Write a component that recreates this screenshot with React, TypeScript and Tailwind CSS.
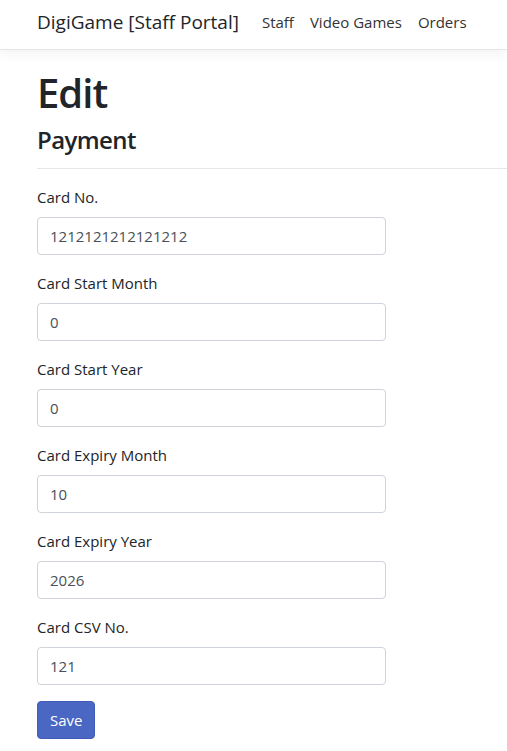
import { useState } from 'react';

const font = { fontFamily: '"Segoe UI", "Open Sans", "Noto Sans", sans-serif' };

const initial = [
  { label: 'Card No.', value: '1212121212121212' },
  { label: 'Card Start Month', value: '0' },
  { label: 'Card Start Year', value: '0' },
  { label: 'Card Expiry Month', value: '10' },
  { label: 'Card Expiry Year', value: '2026' },
  { label: 'Card CSV No.', value: '121' },
];

export default function App() {
  const [fields, setFields] = useState(initial);

  const update = (i: number, v: string) =>
    setFields(f => f.map((x, j) => (j === i ? { ...x, value: v } : x)));

  return (
    <div className="min-h-[751px] bg-white text-[#212529]" style={font}>
      <header className="h-[50px] border-b border-[#e5e5e5] bg-white shadow-[0_4px_12px_rgba(0,0,0,0.05)]">
        <nav className="flex h-full items-center pb-[5px] pl-[37px]">
          <a className="mr-[23px] text-[19px] leading-[28px] text-[#212529]">DigiGame [Staff Portal]</a>
          <ul className="flex text-[15px] text-[#333]">
            <li className="pr-[16px]">Staff</li>
            <li className="pr-[16px]">Video Games</li>
            <li>Orders</li>
          </ul>
        </nav>
      </header>

      <main className="pl-[37px] pt-[19px]">
        <h1 className="mb-[8px] text-[40px] font-semibold leading-[48px] tracking-[-1px]">Edit</h1>
        <h4 className="text-[24px] font-semibold leading-[29px] tracking-[-0.6px]">Payment</h4>
        <hr className="mb-[16px] mt-[14px] border-t border-[#e6e6e6]" />

        <form onSubmit={e => e.preventDefault()}>
          {fields.map((f, i) => (
            <div key={f.label} className="mb-[16px]">
              <label className="mb-[8px] block text-[15px] leading-[24px]">{f.label}</label>
              <input
                value={f.value}
                onChange={e => update(i, e.target.value)}
                className="block h-[38px] w-[349px] rounded-[4px] border border-[#ced4da] px-[12px] text-[15px] text-[#495057] outline-none"
                style={font}
              />
            </div>
          ))}
          <button
            type="submit"
            className="h-[38px] rounded-[4px] border border-[#3f5cb8] bg-[#4a67c4] px-[12px] text-[15px] text-white"
            style={font}
          >
            Save
          </button>
        </form>
      </main>
    </div>
  );
}
